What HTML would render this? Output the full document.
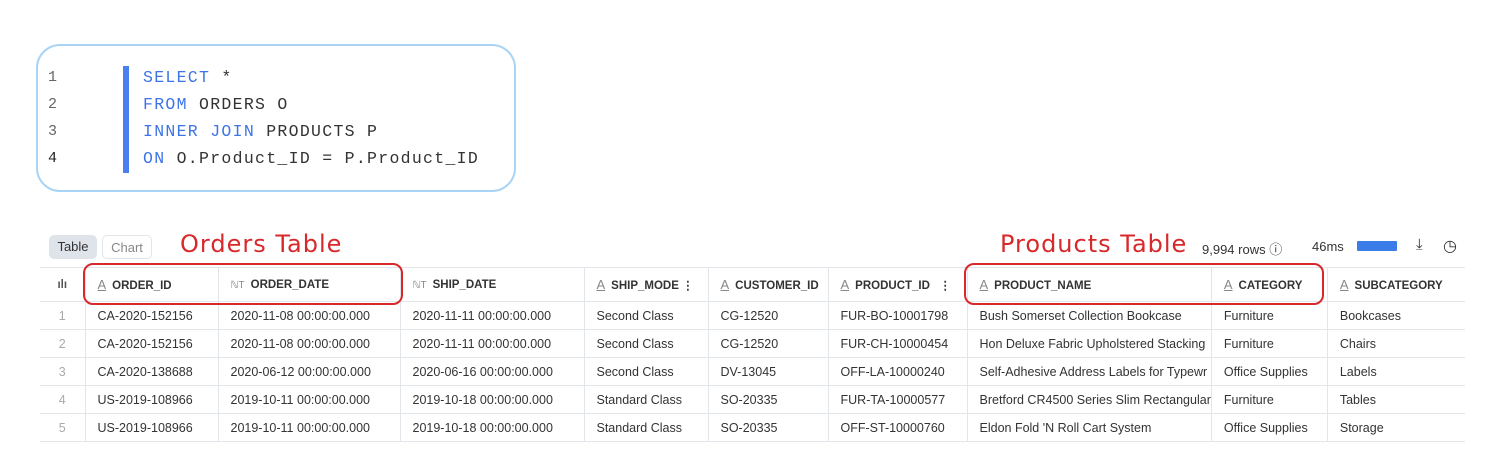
<!DOCTYPE html>
<html><head><style>
body{margin:0;width:1495px;height:476px;background:#fff;position:relative;font-family:"Liberation Sans",sans-serif;overflow:hidden}
.abs{position:absolute}
.code{left:36px;top:44px;width:480px;height:148px;border:2px solid #a9d4f5;border-radius:24px;box-sizing:border-box}
.ln{left:48px;font:15px "Liberation Mono",monospace;color:#666}
.cl{left:143px;font:16.5px "Liberation Mono",monospace;letter-spacing:1.3px;color:#333;white-space:pre}
.k{color:#3d74e6}
.bar{left:123px;top:66px;width:6px;height:107px;background:#4a7ff0}
.btn{top:235px;height:24px;border-radius:5px;font-size:13px;line-height:24px;text-align:center;box-sizing:border-box}
.hand{font-family:"Comic Sans MS","DejaVu Sans",cursive;color:#d8282a;font-size:24px;letter-spacing:1px}
table{position:absolute;left:40px;top:267px;border-collapse:collapse;font-size:12.5px;color:#333}
td,th{border:1px solid #e2e5ea;height:27px;padding:0 0 0 12px;white-space:nowrap;overflow:hidden;text-align:left;font-weight:normal}
th{height:33px;font-size:11.5px;font-weight:bold;color:#333}
tr td:first-child{color:#aaa;text-align:center;padding:0}
th:first-child{padding:0;text-align:center}
.ic{color:#888;font-weight:normal;font-size:13px;text-decoration:underline;margin-right:6px}
table tr>*:first-child{border-left:none}
.red{border:2px solid #d8282a;border-radius:10px;box-sizing:border-box}
</style></head><body>
<div class="abs code"></div>
<div class="abs bar"></div>
<div class="abs ln" style="top:69px">1</div>
<div class="abs ln" style="top:96px">2</div>
<div class="abs ln" style="top:123px">3</div>
<div class="abs ln" style="top:150px;color:#222">4</div>
<div class="abs cl" style="top:68px"><span class="k">SELECT</span> *</div>
<div class="abs cl" style="top:95px"><span class="k">FROM</span> ORDERS O</div>
<div class="abs cl" style="top:122px"><span class="k">INNER JOIN</span> PRODUCTS P</div>
<div class="abs cl" style="top:149px"><span class="k">ON</span> O.Product_ID = P.Product_ID</div>

<div class="abs btn" style="left:49px;width:48px;background:#dfe3ea;color:#333">Table</div>
<div class="abs btn" style="left:102px;width:50px;border:1px solid #e2e5ea;color:#888">Chart</div>
<div class="abs hand" style="left:180px;top:230px">Orders Table</div>
<div class="abs hand" style="left:1000px;top:230px">Products Table</div>
<div class="abs" style="left:1202px;top:239px;font-size:13px;color:#333">9,994 rows ⓘ</div>
<div class="abs" style="left:1312px;top:239px;font-size:13px;color:#333">46ms</div>
<div class="abs" style="left:1357px;top:241px;width:40px;height:10px;background:#3a7de8;border-radius:1px"></div>
<div class="abs" style="left:1416px;top:236px;font-size:15px;color:#333">⤓</div>
<div class="abs" style="left:1443px;top:236px;font-size:16px;color:#333">◷</div>

<table>
<colgroup><col style="width:45px"><col style="width:133px"><col style="width:182px"><col style="width:184px"><col style="width:124px"><col style="width:120px"><col style="width:139px"><col style="width:244px"><col style="width:116px"><col style="width:138px"></colgroup>
<tr><th style="color:#555">ılı</th><th><span class="ic">A</span>ORDER_ID</th><th><span class="ic" style="text-decoration:none;font-size:10px">ℕT</span>ORDER_DATE</th><th><span class="ic" style="text-decoration:none;font-size:10px">ℕT</span>SHIP_DATE</th><th><span class="ic">A</span>SHIP_MODE ⋮</th><th><span class="ic">A</span>CUSTOMER_ID</th><th><span class="ic">A</span>PRODUCT_ID &nbsp; ⋮</th><th><span class="ic">A</span>PRODUCT_NAME</th><th><span class="ic">A</span>CATEGORY</th><th style="border-right:none"><span class="ic">A</span>SUBCATEGORY</th></tr>
<tr><td>1</td><td>CA-2020-152156</td><td>2020-11-08 00:00:00.000</td><td>2020-11-11 00:00:00.000</td><td>Second Class</td><td>CG-12520</td><td>FUR-BO-10001798</td><td>Bush Somerset Collection Bookcase</td><td>Furniture</td><td style="border-right:none">Bookcases</td></tr>
<tr><td>2</td><td>CA-2020-152156</td><td>2020-11-08 00:00:00.000</td><td>2020-11-11 00:00:00.000</td><td>Second Class</td><td>CG-12520</td><td>FUR-CH-10000454</td><td>Hon Deluxe Fabric Upholstered Stacking</td><td>Furniture</td><td style="border-right:none">Chairs</td></tr>
<tr><td>3</td><td>CA-2020-138688</td><td>2020-06-12 00:00:00.000</td><td>2020-06-16 00:00:00.000</td><td>Second Class</td><td>DV-13045</td><td>OFF-LA-10000240</td><td>Self-Adhesive Address Labels for Typewr</td><td>Office Supplies</td><td style="border-right:none">Labels</td></tr>
<tr><td>4</td><td>US-2019-108966</td><td>2019-10-11 00:00:00.000</td><td>2019-10-18 00:00:00.000</td><td>Standard Class</td><td>SO-20335</td><td>FUR-TA-10000577</td><td>Bretford CR4500 Series Slim Rectangular</td><td>Furniture</td><td style="border-right:none">Tables</td></tr>
<tr><td>5</td><td>US-2019-108966</td><td>2019-10-11 00:00:00.000</td><td>2019-10-18 00:00:00.000</td><td>Standard Class</td><td>SO-20335</td><td>OFF-ST-10000760</td><td>Eldon Fold 'N Roll Cart System</td><td>Office Supplies</td><td style="border-right:none">Storage</td></tr>
</table>
<div class="abs red" style="left:83px;top:263px;width:320px;height:42px"></div>
<div class="abs red" style="left:964px;top:263px;width:360px;height:42px"></div>
</body></html>
